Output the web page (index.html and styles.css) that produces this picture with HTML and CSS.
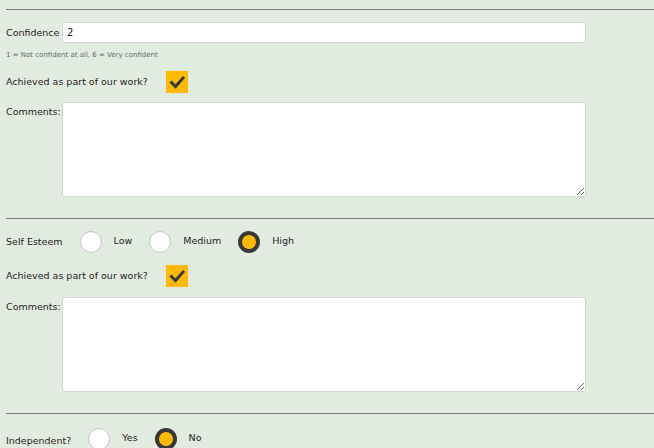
FILE: index.html
```html
<!DOCTYPE html>
<html>
<head>
<meta charset="utf-8">
<link rel="stylesheet" href="styles.css">
</head>
<body>
<div class="page">
  <section class="block block-first">
    <div class="row row-input">
      <label class="lbl">Confidence</label>
      <input class="text-in" type="text" value="2">
    </div>
    <div class="hint">1 = Not confident at all, 6 = Very confident</div>
    <div class="row row-check">
      <span class="lbl">Achieved as part of our work?</span>
      <span class="check"><svg width="22" height="22" viewBox="0 0 22 22"><path d="M5.5 11.5 L9.5 15.5 L17 7" fill="none" stroke="#383838" stroke-width="3" stroke-linecap="square"/></svg></span>
    </div>
    <div class="row row-comments">
      <label class="lbl lbl-top">Comments:</label>
      <textarea class="ta"></textarea>
    </div>
  </section>
  <section class="block">
    <div class="row row-radio">
      <span class="lbl">Self Esteem</span>
      <span class="opt"><span class="radio"></span><span class="opt-t">Low</span></span>
      <span class="opt"><span class="radio"></span><span class="opt-t">Medium</span></span>
      <span class="opt"><span class="radio on"></span><span class="opt-t">High</span></span>
    </div>
    <div class="row row-check row-check2">
      <span class="lbl">Achieved as part of our work?</span>
      <span class="check"><svg width="22" height="22" viewBox="0 0 22 22"><path d="M5.5 11.5 L9.5 15.5 L17 7" fill="none" stroke="#383838" stroke-width="3" stroke-linecap="square"/></svg></span>
    </div>
    <div class="row row-comments">
      <label class="lbl lbl-top">Comments:</label>
      <textarea class="ta"></textarea>
    </div>
  </section>
  <section class="block block-last">
    <div class="row row-radio row-radio3">
      <span class="lbl">Independent?</span>
      <span class="opt"><span class="radio"></span><span class="opt-t">Yes</span></span>
      <span class="opt"><span class="radio on"></span><span class="opt-t">No</span></span>
    </div>
  </section>
</div>
</body>
</html>
```

FILE: styles.css
```css
html, body {
  margin: 0;
  padding: 0;
  background: #e2ebe0;
  height: 100%;
  overflow: hidden;
}
body {
  font-family: "DejaVu Sans", "Liberation Sans", sans-serif;
  font-size: 9.5px;
  line-height: 12px;
  color: #1e1e24;
}
.page {
  padding-top: 9px;
  padding-left: 6px;
}
.block {
  border-top: 1px solid #7d7d7d;
  padding-top: 12px;
  padding-bottom: 21px;
}
.block-last {
  padding-bottom: 0;
}
.row {
  display: flex;
  align-items: center;
}
.lbl {
  white-space: nowrap;
}
.row-input .lbl,
.row-comments .lbl {
  width: 56px;
}
.text-in {
  width: 524px;
  height: 21px;
  box-sizing: border-box;
  border: 1px solid #d6d6d6;
  border-radius: 3px;
  background: #fff;
  padding: 0 4px;
  font-family: inherit;
  font-size: 10px;
  color: #222;
  outline: none;
}
.hint {
  font-size: 7px;
  color: #5f6b6b;
  margin-top: 7px;
  height: 10px;
  line-height: 10px;
}
.row-check {
  margin-top: 11px;
  height: 22px;
}
.check {
  margin-left: 18px;
  width: 22px;
  height: 22px;
  background: #ffba00;
  display: block;
}
.check svg {
  display: block;
}
.row-comments {
  align-items: flex-start;
  margin-top: 9px;
}
.lbl-top {
  padding-top: 4px;
}
.ta {
  margin: 0;
  width: 524px;
  height: 95px;
  box-sizing: border-box;
  border: 1px solid #d6d6d6;
  border-radius: 3px;
  background: #fff;
  display: block;
  font-family: inherit;
  outline: none;
}
.row-radio {
  height: 22px;
}
.opt {
  display: flex;
  align-items: center;
  margin-left: 17px;
}
.radio {
  width: 22px;
  height: 22px;
  box-sizing: border-box;
  border-radius: 50%;
  border: 1px solid #c4c4c4;
  background: #fff;
  display: block;
}
.radio.on {
  border: 4px solid #383838;
  background: #ffba00;
}
.opt-t {
  margin-left: 12px;
  margin-top: -2px;
}
.row-check2 {
  margin-top: 12px;
}
.row-check2 + .row-comments {
  margin-top: 10px;
}
.row-radio3 {
  margin-top: 2px;
}
.row-radio3 .lbl {
  margin-top: 3px;
}
.row-radio3 .opt:first-of-type {
  margin-left: 18px;
}
```
